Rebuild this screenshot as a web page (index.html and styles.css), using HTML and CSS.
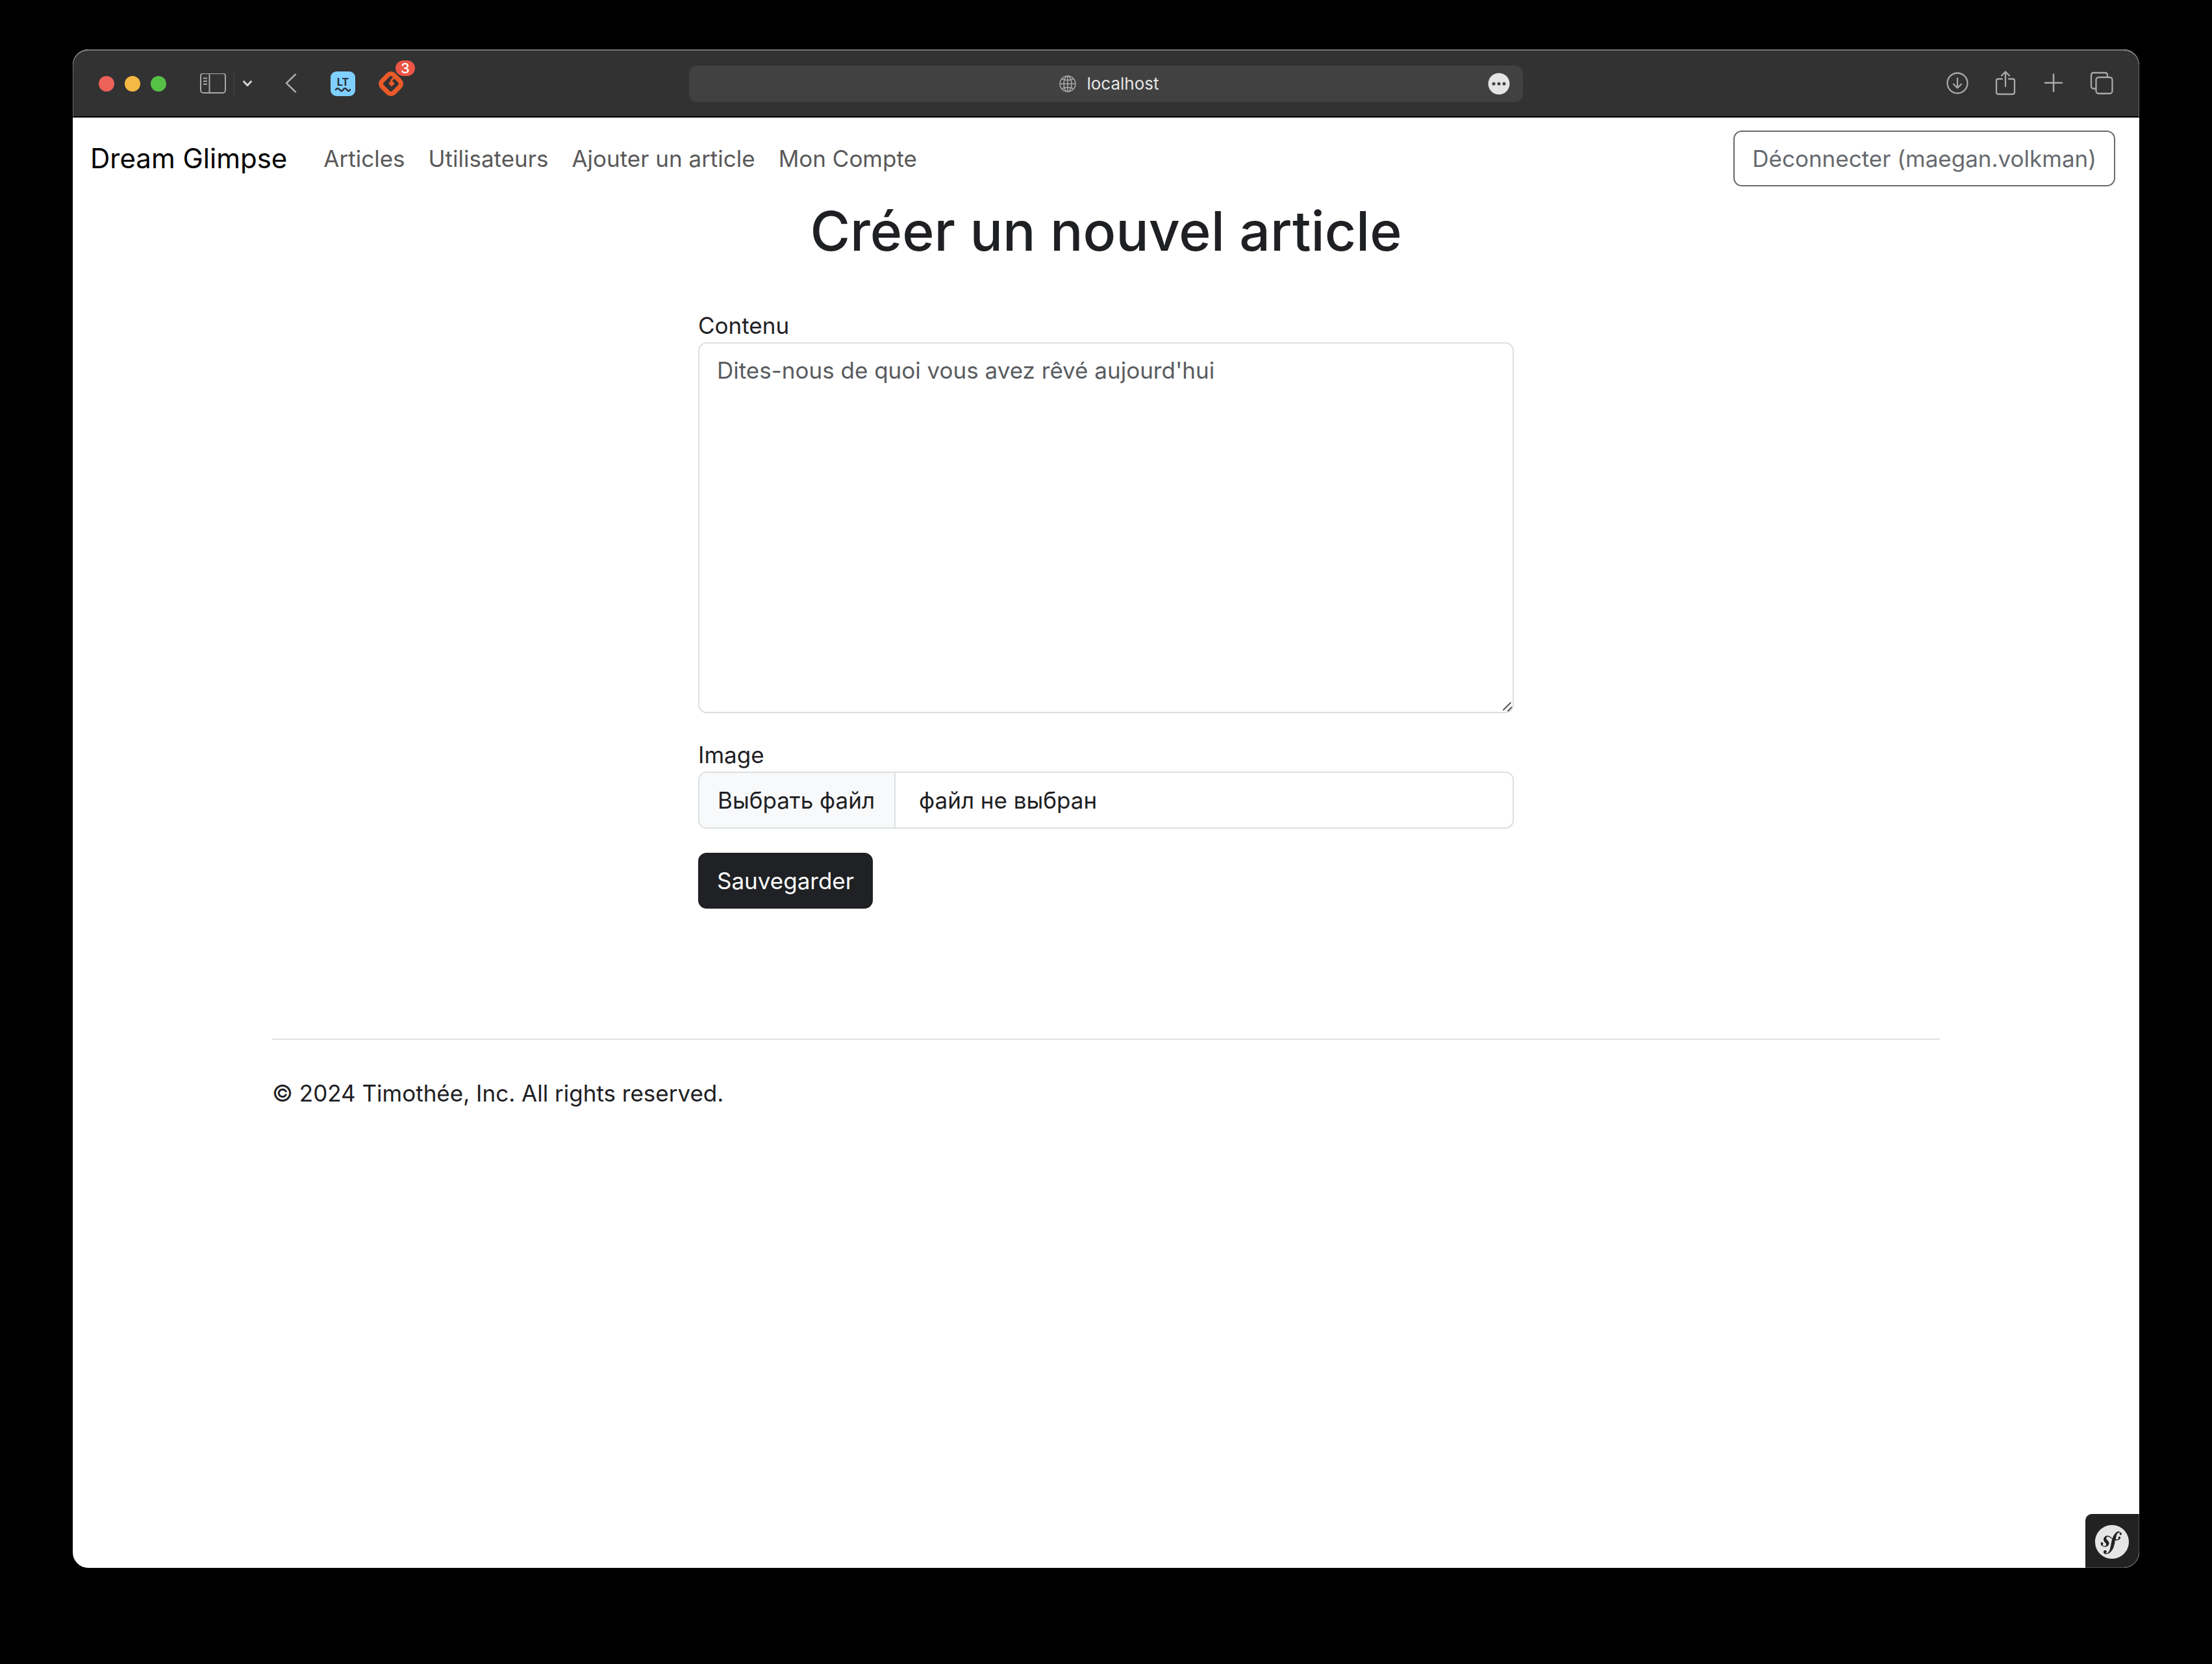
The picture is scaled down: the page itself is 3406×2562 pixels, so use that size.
FILE: index.html
```html
<!DOCTYPE html>
<html lang="fr">
<head>
<meta charset="utf-8">
<meta name="viewport" content="width=device-width, initial-scale=1">
<title>Dream Glimpse</title>
<link rel="stylesheet" href="styles.css">
</head>
<body>
<div class="window">
  <header class="toolbar">
    <div class="tools tools-left">
      <div class="lights"><span class="light red"></span><span class="light yellow"></span><span class="light green"></span></div>
      <div class="sidebar-tools">
        <button class="tool" type="button" aria-label="Sidebar">
          <svg width="40" height="32" viewBox="0 1 40 32" fill="none" stroke="#a9a9aa" stroke-width="2"><rect x="1" y="1" width="38" height="30" rx="4"/><path d="M14.500 1v30M5 8.500h6M5 13h6M5 17.500h6"/></svg>
        </button>
        <span class="divider"></span>
        <button class="tool" type="button" aria-label="Tab groups">
          <svg width="16" height="12" viewBox="0 0 16 12" fill="none" stroke="#d2d2d3" stroke-width="3" stroke-linecap="round" stroke-linejoin="round"><path d="M2.500 2.500 8 8.500l5.500-6"/></svg>
        </button>
      </div>
      <button class="tool back" type="button" aria-label="Back">
        <svg width="18" height="32" viewBox="0 1 18 32" fill="none" stroke="#a9a9aa" stroke-width="2.500" stroke-linecap="round" stroke-linejoin="round"><path d="M16 2.500 2 16l14 13.500"/></svg>
      </button>
      <button class="tool lt" type="button" aria-label="LanguageTool">
        <svg width="38" height="38" viewBox="0 0 38 38"><rect width="38" height="38" rx="9" fill="#7fcfff"/><text x="19" y="22" text-anchor="middle" font-family="Inter, sans-serif" font-weight="700" font-size="16" fill="#2b3038">LT</text><path d="M8 28q3-4 6 0t5.500 0 5.500 0 5 0" fill="none" stroke="#2b3038" stroke-width="2.500" stroke-linecap="round"/></svg>
      </button>
      <button class="tool extension" type="button" aria-label="Extension">
        <svg width="38" height="38" viewBox="0 0 38 38"><path fill="#ea5a28" d="M19 0q4 0 7 3l9 9q3 3.500 3 7t-3 7l-9 9q-3 3-7 3t-7-3l-9-9q-3-3.500-3-7t3-7l9-9q3-3 7-3z"/><path fill="#323233" d="M17 8q2-2 4 0l9 9q2 2 0 4l-9 9q-2 2-4 0l-9-9q-2-2 0-4z"/><path d="M20 14l5 4.500-5 5-5-5z" fill="#ea5a28"/><path d="M18.500 18q.5-5 6-9" fill="none" stroke="#ea5a28" stroke-width="3"/></svg>
        <span class="badge">3</span>
      </button>
    </div>
    <div class="address">
      <svg width="26" height="26" viewBox="0 0 26 26" fill="none" stroke="#a9a9aa" stroke-width="1.500"><circle cx="13" cy="13" r="12"/><ellipse cx="13" cy="13" rx="6" ry="12"/><path d="M13 1v24M1 13h24M4 5.500q9 4 18 0M4 20.500q9-4 18 0"/></svg>
      <span>localhost</span>
      <button class="tool more" type="button" aria-label="More">
        <svg width="34" height="34" viewBox="0 0 34 34"><circle cx="17" cy="17" r="16.500" fill="#e5e5e5"/><g fill="#414142"><circle cx="9" cy="17" r="2.500"/><circle cx="17" cy="17" r="2.500"/><circle cx="25" cy="17" r="2.500"/></g></svg>
      </button>
    </div>
    <div class="tools tools-right">
      <button class="tool" type="button" aria-label="Downloads">
        <svg width="36" height="40" viewBox="0 2 36 40" fill="none" stroke="#a9a9aa" stroke-width="2.300" stroke-linecap="round" stroke-linejoin="round"><circle cx="18" cy="21" r="15.500"/><path d="M18 13.500v15M12 22.500l6 6 6-6"/></svg>
      </button>
      <button class="tool" type="button" aria-label="Share">
        <svg width="36" height="40" viewBox="0 1 36 40" fill="none" stroke="#a9a9aa" stroke-width="2.300" stroke-linecap="round" stroke-linejoin="round"><path d="M13 13.500H7q-3 0-3 3V34q0 3 3 3h22q3 0 3-3V16.500q0-3-3-3h-6M18 25V2.500M12 8.500l6-6 6 6"/></svg>
      </button>
      <button class="tool" type="button" aria-label="New tab">
        <svg width="36" height="40" viewBox="0 2 36 40" fill="none" stroke="#a9a9aa" stroke-width="2.500" stroke-linecap="round"><path d="M18 7.500v26M5 20.500h26"/></svg>
      </button>
      <button class="tool" type="button" aria-label="Tabs">
        <svg width="36" height="40" viewBox="0 2 36 40" fill="none" stroke="#a9a9aa" stroke-width="2.300"><rect x="9.500" y="12" width="25" height="25" rx="4"/><path d="M9.500 29.500H6q-4 0-4-4V9q0-4 4-4h17q4 0 4 4v3"/></svg>
      </button>
    </div>
  </header>

  <div class="page">
    <nav class="navbar">
      <a class="brand" href="#">Dream Glimpse</a>
      <a class="nav-link" href="#">Articles</a>
      <a class="nav-link" href="#">Utilisateurs</a>
      <a class="nav-link" href="#">Ajouter un article</a>
      <a class="nav-link" href="#">Mon Compte</a>
      <button class="btn btn-outline" type="button">Déconnecter (maegan.volkman)</button>
    </nav>
    <main>
      <h1>Créer un nouvel article</h1>
      <form class="form">
        <label for="contenu">Contenu</label>
        <div class="area">
          <textarea id="contenu" placeholder="Dites-nous de quoi vous avez rêvé aujourd'hui"></textarea>
          <svg class="grip" width="16" height="16" viewBox="0 0 16 16" stroke="#555" stroke-width="2" stroke-linecap="round"><path d="M2 13 13 2M9 14.500l5.500-5.500"/></svg>
        </div>
        <label for="image">Image</label>
        <label class="file">
          <input id="image" type="file">
          <span class="file-button">Выбрать файл</span>
          <span class="file-name">файл не выбран</span>
        </label>
        <button class="btn btn-dark" type="submit">Sauvegarder</button>
      </form>
    </main>
    <footer class="footer">© 2024 Timothée, Inc. All rights reserved.</footer>
    <button class="symfony" type="button" aria-label="Symfony">
      <svg width="52" height="52" viewBox="0 0 24 24" fill="#e5e5e5"><path d="M24 12c0 6.628-5.372 12-12 12S0 18.628 0 12 5.372 0 12 0s12 5.372 12 12zm-6.753-7.561c-1.22.042-2.283.715-3.075 1.644-.878 1.02-1.461 2.229-1.881 3.461-.753-.614-1.332-1.414-2.539-1.761-.966-.297-2.015-.105-2.813.514-.41.319-.71.757-.861 1.254-.36 1.176.381 2.225.719 2.6l.737.79c.15.154.519.56.339 1.138-.193.631-.951 1.037-1.732.799-.348-.106-.848-.366-.734-.73.045-.15.152-.263.21-.391.052-.11.077-.194.095-.242.141-.465-.053-1.07-.551-1.223-.465-.143-.939-.03-1.125.566-.209.68.117 1.913 1.86 2.449 2.04.628 3.765-.484 4.009-1.932.153-.907-.255-1.582-1.006-2.447l-.612-.677c-.371-.37-.497-1.002-.114-1.485.324-.409.785-.584 1.539-.379 1.103.3 1.594 1.063 2.412 1.68-.338 1.11-.56 2.223-.759 3.222l-.123.746c-.585 3.07-1.033 4.757-2.194 5.726-.234.166-.57.416-1.073.434-.266.005-.352-.176-.355-.257-.006-.184.15-.27.255-.353.155-.083.39-.224.372-.674-.016-.532-.456-.994-1.094-.973-.477.017-1.203.465-1.176 1.286.028.85.819 1.485 2.012 1.444.638-.021 2.062-.281 3.464-1.949 1.633-1.911 2.09-4.101 2.434-5.706l.383-2.116c.213.024.441.042.69.048 2.034.044 3.049-1.01 3.064-1.776.01-.464-.304-.921-.744-.921-.37 0-.731.265-.83.639-.1.367.546.697.058.999-.347.222-.97.38-1.849.25l.16-.883c.327-1.677.73-3.738 2.257-3.789.111-.006.518.004.526.273.003.09-.018.113-.116.307-.1.15-.138.278-.133.426.015.405.322.671.767.657.599-.018.77-.601.758-.897-.024-.699-.76-1.142-1.734-1.11z"/></svg>
    </button>
  </div>
</div>
</body>
</html>
```
FILE: styles.css
```css
* { box-sizing: border-box; }

body {
  margin: 0;
  min-height: 100vh;
  padding: 76px 112px 148px;
  display: flex;
  background: #000;
  color: #1e2023;
  font: 35px/52px Inter, "Liberation Sans", sans-serif;
}

button, textarea { font: inherit; }
svg { display: block; }

.window {
  flex: 1;
  display: flex;
  flex-direction: column;
  border-radius: 24px;
  overflow: hidden;
  background: #fff;
}

/* Browser toolbar */
.toolbar {
  height: 105px;
  display: grid;
  grid-template-columns: 1fr minmax(0, 1284px) 1fr;
  align-items: center;
  padding: 0 39px;
  background: #323233;
  border: 1px solid #6c6c6d;
  border-top: 2px solid #757575;
  border-bottom: 2px solid #000;
  border-radius: 24px 24px 0 0;
}
.tools { display: flex; align-items: center; }
.tool {
  display: flex;
  padding: 0;
  border: 0;
  background: none;
}
.lights { display: flex; gap: 16px; }
.light { width: 24px; height: 24px; border-radius: 50%; }
.red { background: #ec6158; }
.yellow { background: #f4b942; }
.green { background: #57c147; }
.sidebar-tools {
  display: flex;
  align-items: center;
  gap: 12px;
  margin-left: 52px;
}
.divider { width: 1px; height: 36px; background: #4a4a4b; }
.back { margin-left: 50px; }
.lt { margin-left: 52px; }
.extension { position: relative; margin-left: 36px; }
.badge {
  position: absolute;
  top: -17px;
  left: 26px;
  width: 30px;
  border-radius: 12px;
  background: #eb5545;
  color: #fff;
  font-size: 22px;
  font-weight: 500;
  line-height: 24px;
}
.address {
  position: relative;
  height: 56px;
  display: flex;
  align-items: center;
  justify-content: center;
  gap: 16px;
  padding-left: 10px;
  border-radius: 12px;
  background: #414142;
  color: #e6e6e6;
  font-size: 26px;
}
.more { position: absolute; right: 20px; top: 11px; }
.tools-right { justify-content: flex-end; gap: 38px; }

/* Site */
.page {
  flex: 1;
  display: flex;
  flex-direction: column;
  position: relative;
}
.navbar {
  display: flex;
  align-items: center;
  padding: 20px 37px 14px 27px;
}
.navbar a { text-decoration: none; }
.brand { margin-right: 56px; color: #000; font-size: 42px; }
.nav-link { margin-right: 36px; color: #595959; }
.btn {
  height: 86px;
  padding: 0 27px;
  border: 2px solid;
  border-radius: 13px;
}
.btn-outline {
  margin-left: auto;
  background: #fff;
  border-color: #666a6e;
  color: #666a6e;
}
.btn-dark {
  justify-self: start;
  background: #1f2124;
  border-color: #1f2124;
  color: #fff;
}
h1 {
  margin: 0 0 64px;
  text-align: center;
  font-size: 84px;
  font-weight: 500;
  line-height: 110px;
}
.form {
  display: grid;
  width: 1256px;
  max-width: 100%;
  margin: 0 auto;
}
.area { position: relative; margin-bottom: 38px; }
textarea {
  display: block;
  width: 100%;
  height: 571px;
  padding: 15px 27px;
  border: 2px solid #dcdfe1;
  border-radius: 13px;
  resize: none;
  color: #1e2023;
}
textarea::placeholder { color: #595c5f; opacity: 1; }
.grip { position: absolute; right: 2px; bottom: 2px; }
.file {
  display: flex;
  height: 88px;
  margin-bottom: 37px;
  border: 2px solid #dcdfe1;
  border-radius: 13px;
  overflow: hidden;
  line-height: 84px;
}
.file input { position: absolute; width: 1px; height: 1px; opacity: 0; }
.file-button {
  padding: 0 30px 0 28px;
  border-right: 2px solid #dcdfe1;
  background: #f8f9fa;
}
.file-name { padding-left: 36px; }
.footer {
  width: 2568px;
  max-width: 100%;
  margin: 200px auto 0;
  padding-top: 56px;
  border-top: 2px solid #dee2e6;
}
.symfony {
  position: absolute;
  right: 0;
  bottom: 0;
  padding: 17px 15px 13px;
  border: solid #505050;
  border-width: 0 1px 1px 0;
  border-radius: 10px 0 24px 0;
  background: #222;
}
```
